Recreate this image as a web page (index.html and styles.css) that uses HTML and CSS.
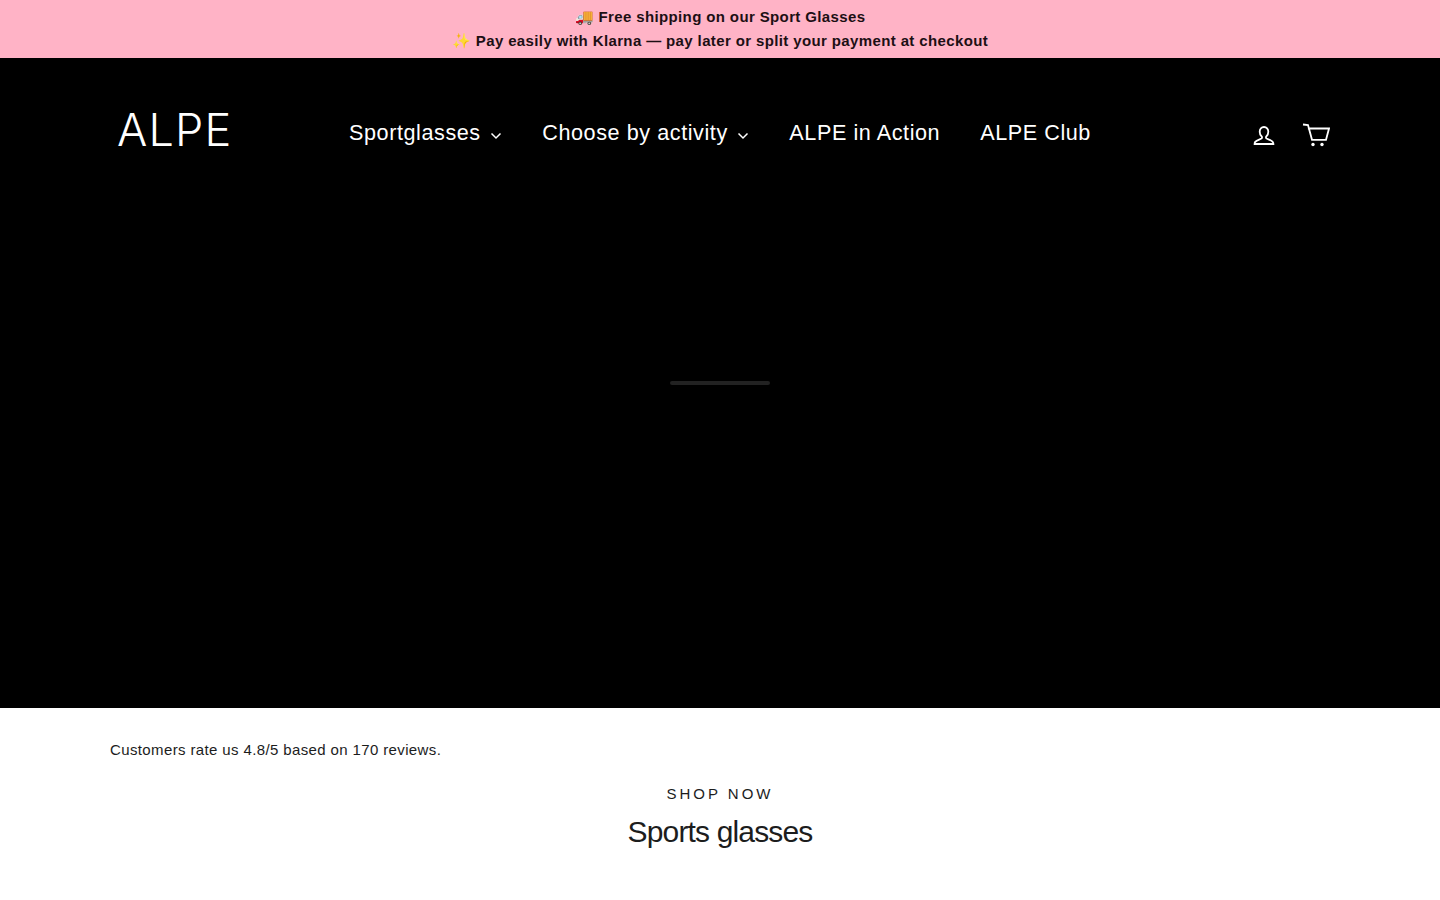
FILE: index.html
```html
<!DOCTYPE html>
<html lang="en">
<head>
  <meta charset="UTF-8">
  <title>ALPE</title>
  <link rel="stylesheet" href="styles.css">
</head>
<body>
  <div class="announcement">
    <p>🚚 Free shipping on our Sport Glasses</p>
    <p>✨ Pay easily with Klarna — pay later or split your payment at checkout</p>
  </div>

  <section class="hero">
    <header class="site-header">
      <a class="logo" href="#">ALPE</a>
      <nav class="site-nav">
        <a href="#">Sportglasses
          <svg class="chevron" viewBox="0 0 12 8"><path d="M1.5 1.5 6 6l4.500-4.500"/></svg>
        </a>
        <a href="#">Choose by activity
          <svg class="chevron" viewBox="0 0 12 8"><path d="M1.5 1.5 6 6l4.500-4.500"/></svg>
        </a>
        <a href="#">ALPE in Action</a>
        <a href="#">ALPE Club</a>
      </nav>
      <div class="header-icons">
        <a href="#" aria-label="Log in">
          <svg class="icon-account" viewBox="0 0 22 22">
            <path d="M11 2c-2.600 0-4.300 2-4.300 4.700 0 2 .8 3.800 2 4.800.5.500.5 1.600-.2 2.100-1.300.8-4.900 1.400-6.300 3.300-.5.700-.6 1.500-.6 2.100h18.800c0-.6-.1-1.400-.6-2.100-1.400-1.900-5-2.500-6.300-3.300-.7-.5-.7-1.600-.2-2.100 1.200-1 2-2.800 2-4.800C15.300 4 13.600 2 11 2z"/>
          </svg>
        </a>
        <a href="#" aria-label="Cart">
          <svg class="icon-cart" viewBox="0 0 28 26">
            <path d="M1 1.500l5 .5 4 14.800h14l3-11.300H5.900"/>
            <circle cx="11" cy="21.500" r="1.700"/>
            <circle cx="20" cy="21.500" r="1.700"/>
          </svg>
        </a>
      </div>
    </header>
    <div class="loader"></div>
  </section>

  <main class="content">
    <p class="rating">Customers rate us 4.8/5 based on 170 reviews.</p>
    <div class="section-head">
      <p class="subheading">SHOP NOW</p>
      <h2>Sports glasses</h2>
    </div>
  </main>
</body>
</html>
```

FILE: styles.css
```css
body {
  margin: 0;
  font-family: "Liberation Sans", Arial, sans-serif;
  color: #1c1d1d;
  background: #fff;
}
a {
  color: inherit;
  text-decoration: none;
}
.announcement {
  background: #ffb3c6;
  color: #1c0f14;
  height: 58px;
  padding-top: 5px;
  box-sizing: border-box;
  text-align: center;
  font-size: 15px;
  font-weight: 700;
  letter-spacing: 0.375px;
  line-height: 24px;
}
.announcement p {
  margin: 0;
}
.hero {
  position: relative;
  background: #000;
  height: 650px;
  color: #fff;
}
.site-header {
  display: grid;
  grid-template-columns: 1fr auto 1fr;
  align-items: center;
  padding: 38px 110px 0;
}
.logo {
  font-family: Inter, "Liberation Sans", sans-serif;
  font-weight: 300;
  font-size: 45px;
  line-height: 68px;
  letter-spacing: 1.2px;
  padding-left: 7px;
}
.site-nav {
  display: flex;
  gap: 40px;
  font-size: 21.6px;
  letter-spacing: 0.57px;
  margin-top: 5px;
}
.chevron {
  width: 12px;
  height: 8px;
  margin-left: 3px;
  fill: none;
  stroke: #fff;
  stroke-width: 1.500;
}
.header-icons {
  display: flex;
  justify-content: flex-end;
  align-items: center;
  gap: 27px;
  margin-top: 12px;
}
.header-icons a {
  display: flex;
}
.header-icons svg {
  fill: none;
  stroke: #fff;
  stroke-width: 1.800;
}
.icon-account {
  width: 22px;
  height: 22px;
}
.icon-cart {
  width: 28px;
  height: 26px;
}
.header-icons circle {
  fill: #fff;
  stroke: none;
}
.loader {
  position: absolute;
  left: 50%;
  top: 50%;
  width: 100px;
  height: 4px;
  margin: -2px 0 0 -50px;
  background: #222;
  border-radius: 2px;
}
.content {
  padding: 32px 110px 0;
}
.rating {
  margin: 0;
  font-size: 15px;
  line-height: 20px;
  letter-spacing: 0.375px;
}
.section-head {
  text-align: center;
  margin-top: 24px;
}
.subheading {
  margin: 0;
  font-size: 15px;
  line-height: 20px;
  letter-spacing: 3px;
}
h2 {
  margin: 10px 0 0;
  font-size: 30px;
  font-weight: 400;
  line-height: 36px;
  letter-spacing: -0.85px;
}
```
